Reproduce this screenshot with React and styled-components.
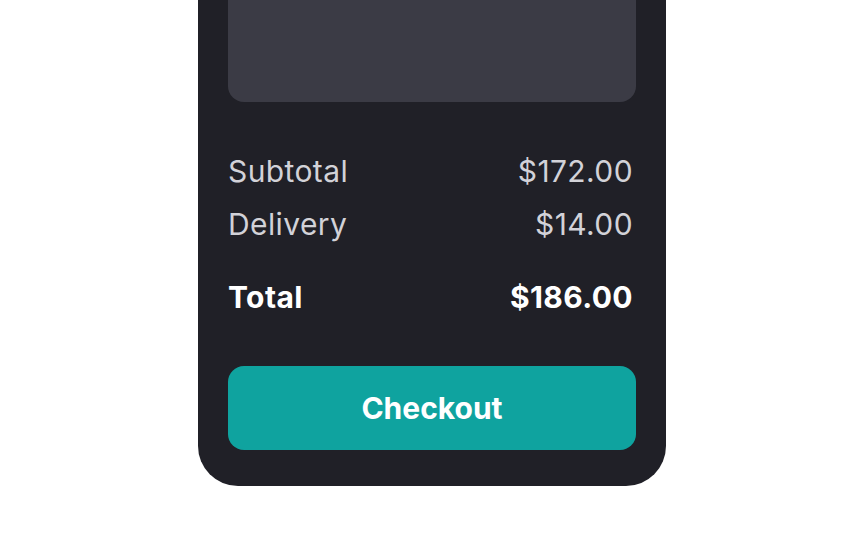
import React from "react";
import styled, { createGlobalStyle } from "styled-components";

const GlobalStyle = createGlobalStyle`
  body {
    margin: 0;
    background: #ffffff;
    font-family: "Inter", "Noto Sans", sans-serif;
  }
`;

const Page = styled.div`
  display: flex;
  justify-content: center;
  height: 540px;
  overflow: hidden;
`;

const Panel = styled.div`
  width: 468px;
  margin-top: -100px;
  background: #202027;
  border-radius: 40px;
  padding: 30px 30px 36px;
  box-sizing: border-box;
  align-self: flex-start;
  display: flex;
  flex-direction: column;
`;

const Preview = styled.div`
  height: 172px;
  background: #3b3b45;
  border-radius: 16px;
`;

const Summary = styled.div`
  display: flex;
  flex-direction: column;
  gap: 19px;
  margin-top: 52px;
  padding-right: 3px;
`;

const Row = styled.div`
  display: flex;
  justify-content: space-between;
  align-items: center;
  font-size: 30px;
  line-height: 34px;
  letter-spacing: 0.4px;
  color: ${(p) => (p.total ? "#ffffff" : "#d2d2d8")};
  font-weight: ${(p) => (p.total ? 700 : 400)};
  margin-top: ${(p) => (p.total ? "20px" : "0")};
`;

const Checkout = styled.button`
  margin-top: 52px;
  height: 84px;
  border: none;
  border-radius: 16px;
  background: #0fa39f;
  color: #ffffff;
  font-family: "Inter", "Noto Sans", sans-serif;
  font-size: 30px;
  font-weight: 700;
  cursor: pointer;
`;

const rows = [
  { label: "Subtotal", value: "$172.00" },
  { label: "Delivery", value: "$14.00" },
];

export default function App() {
  return (
    <>
      <GlobalStyle />
      <Page>
        <Panel>
          <Preview />
          <Summary>
            {rows.map((r) => (
              <Row key={r.label}>
                <span>{r.label}</span>
                <span>{r.value}</span>
              </Row>
            ))}
            <Row total>
              <span>Total</span>
              <span>$186.00</span>
            </Row>
          </Summary>
          <Checkout>Checkout</Checkout>
        </Panel>
      </Page>
    </>
  );
}
